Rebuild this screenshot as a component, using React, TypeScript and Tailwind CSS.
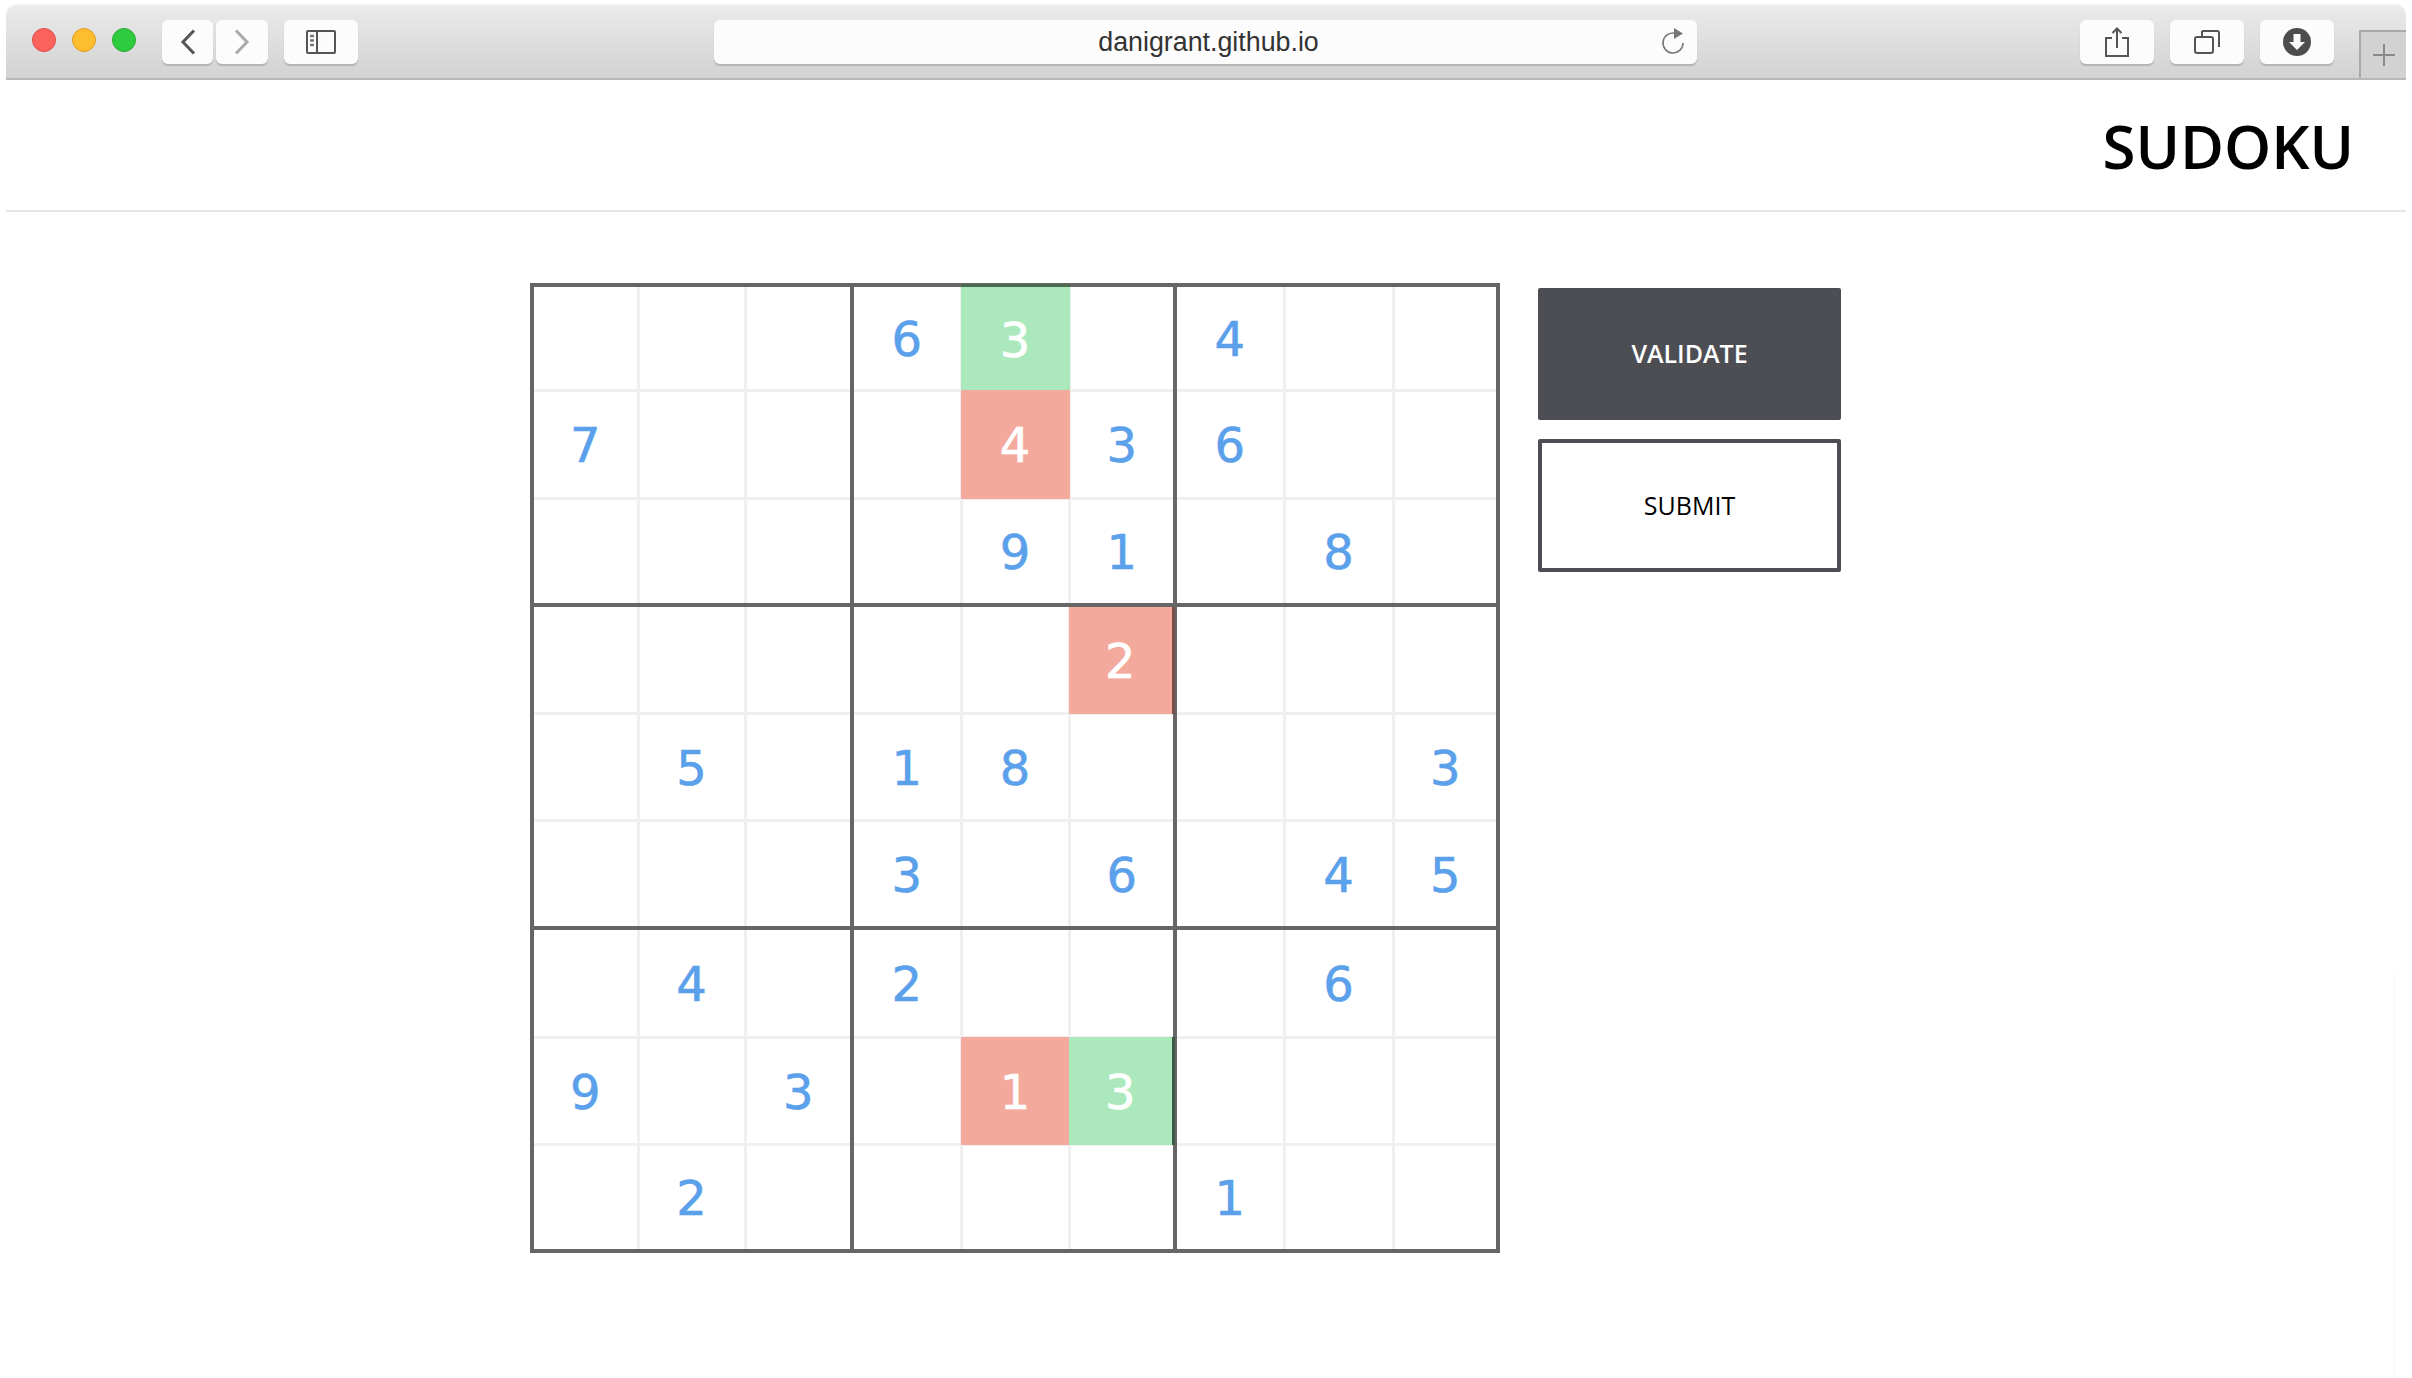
const board = [
  ['', '', '', '6', '3', '', '4', '', ''],
  ['7', '', '', '', '4', '3', '6', '', ''],
  ['', '', '', '', '9', '1', '', '8', ''],
  ['', '', '', '', '', '2', '', '', ''],
  ['', '5', '', '1', '8', '', '', '', '3'],
  ['', '', '', '3', '', '6', '', '4', '5'],
  ['', '4', '', '2', '', '', '', '6', ''],
  ['9', '', '3', '', '1', '3', '', '', ''],
  ['', '2', '', '', '', '', '1', '', ''],
]

const colWidths = ['w-[106px]', 'w-[107px]', 'w-[107px]', 'w-[109px]', 'w-[108px]', 'w-[106px]', 'w-[109px]', 'w-[109px]', 'w-[105px]']
const rowHeights = ['h-[105px]', 'h-[108px]', 'h-[107px]', 'h-[108px]', 'h-[107px]', 'h-[108px]', 'h-[109px]', 'h-[107px]', 'h-[107px]']

// cells that were validated: the fill sits over the grid lines
const marked: Record<string, string> = {
  '0-4': 'bg-[#abe9bd] -top-[3px] -left-[2px] -right-[2px] -bottom-[2px] border-t-[3px] border-t-[#4a6b52]',
  '1-4': 'bg-[#f3aa9c] -top-[2px] -left-[2px] -right-[2px] -bottom-[2px]',
  '3-5': 'bg-[#f3aa9c] top-0 -left-[2px] -right-[2px] -bottom-[2px] border-r-[3px] border-r-[#7a5048]',
  '7-4': 'bg-[#f3aa9c] -top-[2px] -left-[2px] -right-[2px] -bottom-[2px]',
  '7-5': 'bg-[#abe9bd] -top-[2px] -left-[2px] -right-[2px] -bottom-[2px] border-r-[3px] border-r-[#3f5a45]',
}

function ToolButton({ className, children }: { className: string; children: React.ReactNode }) {
  return (
    <div className={'h-[44px] rounded-[6px] bg-[#fcfcfc] shadow-[0_2px_1px_rgba(0,0,0,0.16)] flex items-center justify-center ' + className}>
      {children}
    </div>
  )
}

function Toolbar() {
  return (
    <div className="relative mt-1 h-[76px] flex items-start rounded-t-[10px] border-b-[2px] border-[#b8b8b8] bg-gradient-to-b from-[#ebebeb] to-[#d2d2d2] shadow-[inset_0_2px_0_#f3f3f3]">
      <div className="flex gap-4 ml-[26px] mt-[24px]">
        <div className="w-6 h-6 rounded-full bg-[#fc625c] border border-[#df4b45]" />
        <div className="w-6 h-6 rounded-full bg-[#fdbd2e] border border-[#df9e26]" />
        <div className="w-6 h-6 rounded-full bg-[#2fcb3f] border border-[#27aa35]" />
      </div>

      <ToolButton className="w-[51px] ml-[26px] mt-4">
        <svg width="16" height="26" viewBox="0 0 16 26" fill="none" stroke="#555" strokeWidth="3">
          <path d="M14 1.500 3 13l11 11.500" />
        </svg>
      </ToolButton>
      <ToolButton className="w-[52px] ml-[3px] mt-4">
        <svg width="16" height="26" viewBox="0 0 16 26" fill="none" stroke="#aaa" strokeWidth="3">
          <path d="m2 1.500 11 11.500L2 24.500" />
        </svg>
      </ToolButton>
      <ToolButton className="w-[74px] ml-4 mt-4">
        <svg width="30" height="24" viewBox="0 0 30 24" fill="none" stroke="#555" strokeWidth="2">
          <rect x="1" y="1" width="28" height="22" rx="1" />
          <path d="M11 1v22" />
          <path d="M4 6h4M4 10.500h4M4 15h4" stroke="#777" strokeWidth="2.500" />
        </svg>
      </ToolButton>

      <ToolButton className="relative w-[983px] ml-[356px] mt-4">
        <span className="pl-[6px] pt-[1px] font-['Liberation_Sans',sans-serif] text-[26.800px] text-[#333]">danigrant.github.io</span>
        <svg className="absolute right-[12px] top-[8px]" width="24" height="27" viewBox="0 0 24 27" fill="none" stroke="#777" strokeWidth="2">
          <path d="M15 5.500A10 10 0 1 0 22 15" strokeWidth="1.600" />
          <path d="M13 0v11l9-5.500z" fill="#777" stroke="none" />
        </svg>
      </ToolButton>

      <ToolButton className="w-[74px] ml-[383px] mt-4">
        <svg width="24" height="30" viewBox="0 0 24 30" fill="none" stroke="#555" strokeWidth="2">
          <path d="M7 11H1v18h22V11h-6" />
          <path d="M12 21V1.500M7.500 6 12 1.500 16.500 6" />
        </svg>
      </ToolButton>
      <ToolButton className="w-[74px] ml-4 mt-4">
        <svg width="26" height="24" viewBox="0 0 26 24" fill="none" stroke="#555" strokeWidth="2">
          <rect x="1" y="7" width="18" height="16" rx="2" />
          <path d="M8 1h15a2 2 0 0 1 2 2v14" />
          <path d="M8 1v6" />
        </svg>
      </ToolButton>
      <ToolButton className="w-[74px] ml-4 mt-4">
        <svg width="28" height="28" viewBox="0 0 28 28">
          <circle cx="14" cy="14" r="14" fill="#4d4d4d" />
          <path d="M10.500 6h7v8H22l-8 8-8-8h4.500z" fill="#fcfcfc" />
        </svg>
      </ToolButton>

      <div className="absolute right-0 bottom-0 w-[47px] h-[48px] border-t-[2px] border-l-[2px] border-[#a9a9a9] bg-[#d2d2d2] flex items-center justify-center">
        <svg width="24" height="24" viewBox="0 0 24 24" stroke="#8a8a8a" strokeWidth="2">
          <path d="M12 1v22M1 12h22" />
        </svg>
      </div>
    </div>
  )
}

function Board() {
  return (
    <table className="w-[970px] h-[970px] table-fixed border-collapse border-[4px] border-[#666]">
      <colgroup>
        {colWidths.map((w, i) => (
          <col key={i} className={w} />
        ))}
      </colgroup>
      <tbody>
        {board.map((row, r) => (
          <tr key={r} className={rowHeights[r]}>
            {row.map((val, c) => {
              const fill = marked[r + '-' + c]
              return (
                <td
                  key={c}
                  className={
                    'relative p-0 pt-[2px] text-center align-middle border-[3px] border-[#f0f0f0] ' +
                    (c % 3 === 2 && c < 8 ? 'border-r-[4px] border-r-[#666] ' : '') +
                    (c % 3 === 0 && c > 0 ? 'border-l-[4px] border-l-[#666] ' : '') +
                    (r % 3 === 2 && r < 8 ? 'border-b-[4px] border-b-[#666] ' : '') +
                    (r % 3 === 0 && r > 0 ? 'border-t-[4px] border-t-[#666] ' : '')
                  }
                >
                  {fill ? (
                    <div className={'absolute pt-[2px] flex items-center justify-center text-white text-[48px] leading-none [-webkit-text-stroke:0.6px_white] ' + fill}>{val}</div>
                  ) : (
                    <span className="text-[#5aa0ea] text-[48px] leading-none [-webkit-text-stroke:0.6px_#5aa0ea]">{val}</span>
                  )}
                </td>
              )
            })}
          </tr>
        ))}
      </tbody>
    </table>
  )
}

export default function App() {
  return (
    <div className="relative w-[2412px] h-[1378px] overflow-hidden bg-white px-[6px] font-['DejaVu_Sans',sans-serif]">
      <Toolbar />
      <div className="flex items-center justify-end h-[132px] pr-[52px] border-b-[2px] border-[#e6e6e6]">
        <h1 className="pt-[1px] text-[60px] leading-none font-semibold text-black font-['Open_Sans',sans-serif]">SUDOKU</h1>
      </div>
      <div className="flex items-start ml-[524px] mt-[71px]">
        <Board />
        <div className="flex flex-col gap-[19px] ml-[38px] mt-[5px] w-[303px] font-['Open_Sans',sans-serif] text-[25px]">
          <button className="h-[132px] rounded-[2px] bg-[#4d4e53] font-semibold text-white">VALIDATE</button>
          <button className="h-[133px] rounded-[2px] border-[4px] border-[#4d4e53] bg-white font-medium text-black">SUBMIT</button>
        </div>
      </div>
      <div className="absolute right-[17px] top-[972px] bottom-0 w-px bg-[#f7f7f7]" />
    </div>
  )
}
